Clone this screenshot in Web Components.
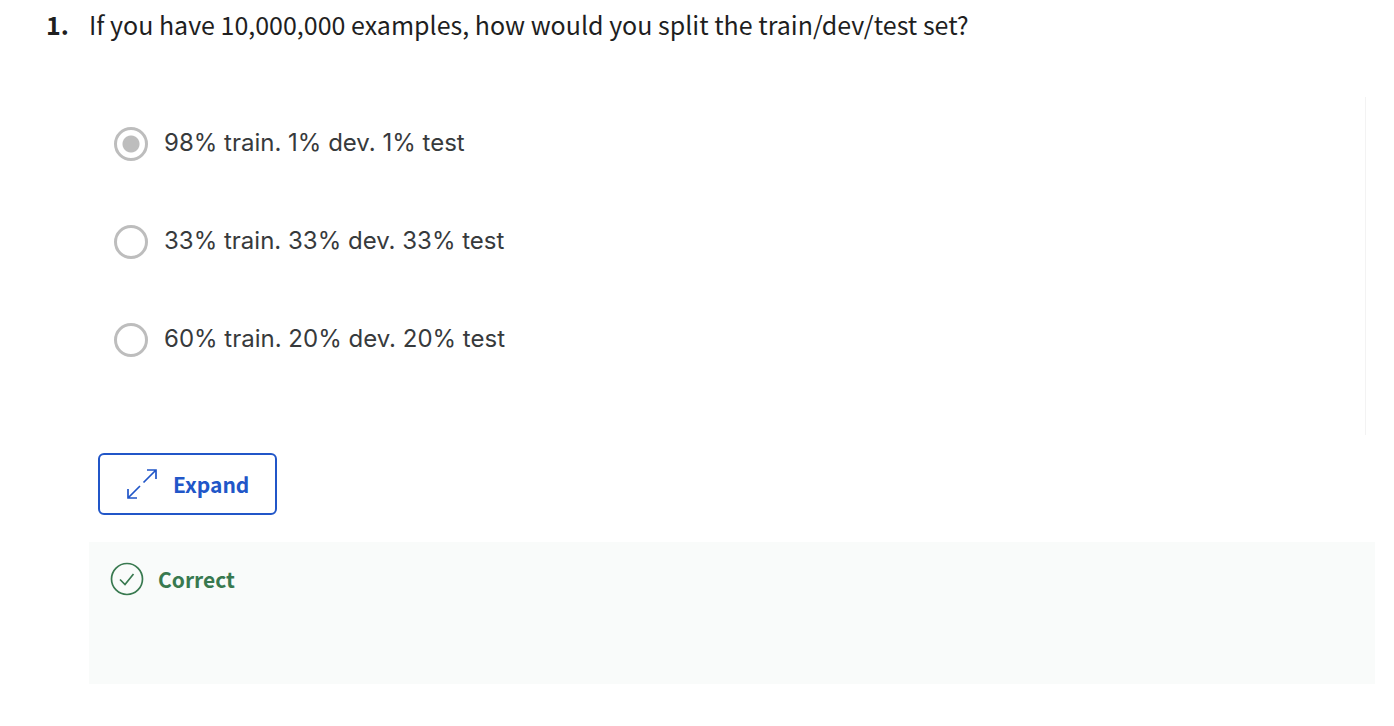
<!DOCTYPE html>
<html lang="en">
<head>
<meta charset="utf-8">
<title>Quiz question</title>
<style>
body { margin: 0; background: #fff; color: #1f1f1f; font-family: "Noto Sans CJK SC", "Noto Sans", sans-serif; }
</style>
</head>
<body>
<quiz-question number="1.">
  <span slot="prompt">If you have 10,000,000 examples, how would you split the train/dev/test set?</span>
  <quiz-options legend="Answer choices">
    <quiz-option name="split" checked>98% train. 1% dev. 1% test</quiz-option>
    <quiz-option name="split">33% train. 33% dev. 33% test</quiz-option>
    <quiz-option name="split">60% train. 20% dev. 20% test</quiz-option>
  </quiz-options>
  <expand-button>Expand</expand-button>
  <quiz-feedback>Correct</quiz-feedback>
</quiz-question>
<script>
class ShadowElement extends HTMLElement {
  constructor() {
    super();
    this.attachShadow({ mode: "open" });
  }
  connectedCallback() {
    this.shadowRoot.innerHTML = this.render();
  }
}

customElements.define("quiz-question", class extends ShadowElement {
  render() {
    return `
      <style>
        :host { display: grid; grid-template-columns: 43px minmax(0, 1fr); padding: 4px 19px 40px 46px; }
        h2, .number { margin: 0; font-size: 25px; line-height: 40px; font-weight: 400; }
        .number { font-weight: 700; }
        .body { grid-column: 2; display: flex; flex-direction: column; padding-top: 53px; }
      </style>
      <div class="number">${this.getAttribute("number")}</div>
      <h2><slot name="prompt"></slot></h2>
      <div class="body"><slot></slot></div>`;
  }
});

customElements.define("quiz-options", class extends ShadowElement {
  render() {
    return `
      <style>
        :host { display: block; margin-right: 9px; padding: 30px 25px 78px; border-right: 1px solid #f3f3f3; }
        .group { display: grid; gap: 64px; }
      </style>
      <div class="group" role="radiogroup" aria-label="${this.getAttribute("legend")}"><slot></slot></div>`;
  }
});

customElements.define("quiz-option", class extends ShadowElement {
  render() {
    return `
      <style>
        :host { display: block; color: #373a3c; font: 24px/32px Inter, sans-serif; }
        label { display: flex; align-items: flex-start; gap: 16px; }
        input {
          appearance: none; box-sizing: border-box; flex: none; width: 34px; height: 34px; margin: 0;
          border: 3px solid #bdbdbd; border-radius: 50%; background: #fff;
        }
        input:checked { background: radial-gradient(circle, #bdbdbd 8px, #fff 9px); }
      </style>
      <label><input type="radio" name="${this.getAttribute("name")}" ${this.hasAttribute("checked") ? "checked" : ""}><span><slot></slot></span></label>`;
  }
});

customElements.define("expand-button", class extends ShadowElement {
  render() {
    return `
      <style>
        :host { display: block; margin: 18px 9px 27px; }
        button {
          box-sizing: border-box; height: 62px; padding: 0 26px; display: flex; align-items: center; gap: 15px;
          border: 2px solid #2156c8; border-radius: 6px; background: #fff; color: #2156c8;
          font: 700 21px/32px "Noto Sans CJK SC", "Noto Sans", sans-serif;
        }
        svg { display: block; fill: none; stroke: currentColor; stroke-width: 1.700; }
      </style>
      <button type="button">
        <svg width="32" height="32" viewBox="0 0 32 32" aria-hidden="true">
          <path d="M17.500 14.500 30 2M21 2h9v9M14 18 2 30M2 21v9h9"/>
        </svg>
        <span><slot></slot></span>
      </button>`;
  }
});

customElements.define("quiz-feedback", class extends ShadowElement {
  render() {
    return `
      <style>
        :host {
          display: flex; align-items: flex-start; gap: 14px; box-sizing: border-box; min-height: 142px; padding: 20px 21px;
          background: #f9fbfa; color: #38794f; font-size: 21px; line-height: 34px; font-weight: 700;
        }
        svg { display: block; fill: none; stroke: currentColor; stroke-width: 1.700; }
      </style>
      <svg width="34" height="34" viewBox="0 0 34 34" aria-hidden="true">
        <circle cx="17" cy="17" r="15.500"/>
        <path d="m10 17.500 5 5L23.500 12"/>
      </svg>
      <span role="status"><slot></slot></span>`;
  }
});
</script>
</body>
</html>
